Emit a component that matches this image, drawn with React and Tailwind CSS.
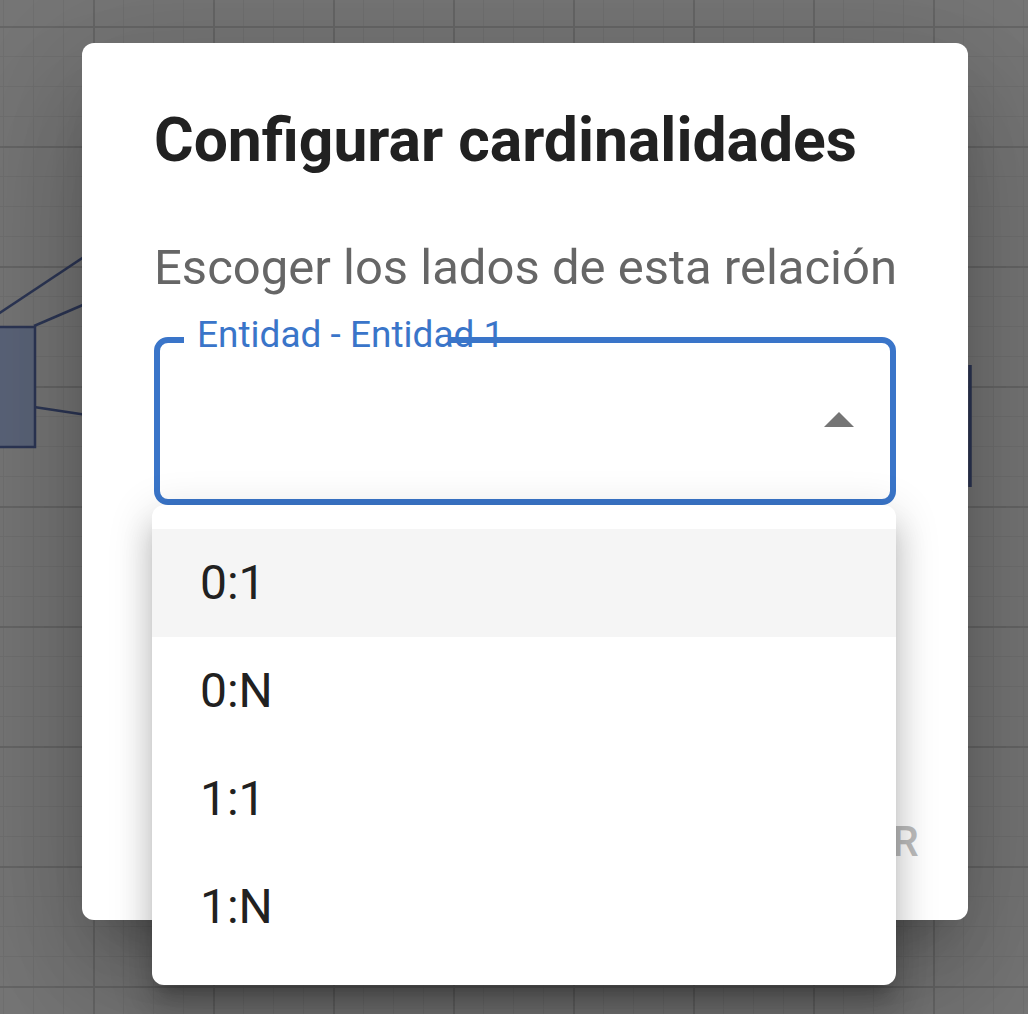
import React from "react";

const opciones = ["0:1", "0:N", "1:1", "1:N"];

function Lienzo() {
  // fondo del diagrama, ya oscurecido por el backdrop del diálogo
  return (
    <svg className="absolute inset-0 h-full w-full" width="1028" height="1014">
      <defs>
        <pattern id="menor" x="3" y="26" width="30" height="30" patternUnits="userSpaceOnUse">
          <path d="M0.5 0V30M0 0.5H30" stroke="#707070" strokeWidth="1" />
        </pattern>
        <pattern id="mayor" x="93" y="26" width="120" height="120" patternUnits="userSpaceOnUse">
          <path d="M1 0V120M0 1H120" stroke="#666666" strokeWidth="2" />
        </pattern>
      </defs>
      <rect width="1028" height="1014" fill="#767676" />
      <rect width="1028" height="1014" fill="url(#menor)" />
      <rect width="1028" height="1014" fill="url(#mayor)" />

      <g stroke="#2c3655" strokeWidth="2.5" fill="none">
        <line x1="-2" y1="314" x2="120" y2="233" />
        <line x1="34" y1="326" x2="120" y2="289" />
        <line x1="34" y1="407" x2="120" y2="420" />
      </g>
      <rect x="-10" y="327" width="45" height="120" fill="#5b6479" stroke="#2c3655" strokeWidth="2.5" />
      <line x1="970" y1="365" x2="970" y2="487" stroke="#2c3655" strokeWidth="3.5" />
    </svg>
  );
}

function CampoSelect() {
  return (
    <div className="relative h-[168px]">
      <div className="flex h-full items-center justify-end rounded-[14px] border-[6px] border-[#3a75c9] pr-[36px]">
        <svg width="30" height="15" viewBox="0 0 30 15" className="-mt-[4px]">
          <path d="M0 15L15 0L30 15Z" fill="#757575" />
        </svg>
      </div>
      <span className="absolute left-[30px] top-0 h-[6px] w-[266px] bg-white" />
      <label className="absolute left-[43px] top-[-20px] whitespace-nowrap text-[37px] leading-[36px] text-[#3a75c9]">
        Entidad - Entidad 1
      </label>
      <span className="absolute left-[296px] top-0 h-[6px] w-[30px] bg-[#3a75c9]" />
    </div>
  );
}

export default function App() {
  return (
    <div className="relative h-[1014px] w-full overflow-hidden font-[Roboto,sans-serif]">
      <Lienzo />

      <div className="absolute left-[82px] top-[43px] flex h-[877px] w-[886px] flex-col rounded-[12px] bg-white shadow-[0_33px_45px_-21px_rgba(0,0,0,0.2),0_72px_114px_9px_rgba(0,0,0,0.14),0_27px_138px_24px_rgba(0,0,0,0.12)]">
        <div className="px-[72px] pt-[50px]">
          <h2 className="whitespace-nowrap text-[60.6px] font-bold leading-[96px] text-[#212121]">
            Configurar cardinalidades
          </h2>
          <p className="mt-[43px] whitespace-nowrap text-[49px] leading-[72px] text-[#666666]">
            Escoger los lados de esta relación
          </p>
          <div className="mt-[33px]">
            <CampoSelect />
          </div>
        </div>

        <div className="mt-auto flex justify-end gap-[24px] p-[24px]">
          <button className="px-[24px] py-[18px] text-[42px] font-medium uppercase leading-[73.5px] tracking-[1.2px] text-[#bdbdbd]">
            Cancelar
          </button>
          <button className="px-[24px] py-[18px] text-[42px] font-medium uppercase leading-[73.5px] tracking-[1.2px] text-[#bdbdbd]">
            Guardar
          </button>
        </div>
      </div>

      <ul className="absolute left-[152px] top-[505px] w-[744px] rounded-[12px] bg-white py-[24px] shadow-[0_15px_15px_-9px_rgba(0,0,0,0.2),0_24px_30px_3px_rgba(0,0,0,0.14),0_9px_42px_6px_rgba(0,0,0,0.12)]">
        {opciones.map((op, i) => (
          <li
            key={op}
            className={`flex h-[108px] items-center pl-[48px] text-[48px] leading-[72px] text-[#212121] ${
              i === 0 ? "bg-[#f5f5f5]" : ""
            }`}
          >
            {op}
          </li>
        ))}
      </ul>
    </div>
  );
}
